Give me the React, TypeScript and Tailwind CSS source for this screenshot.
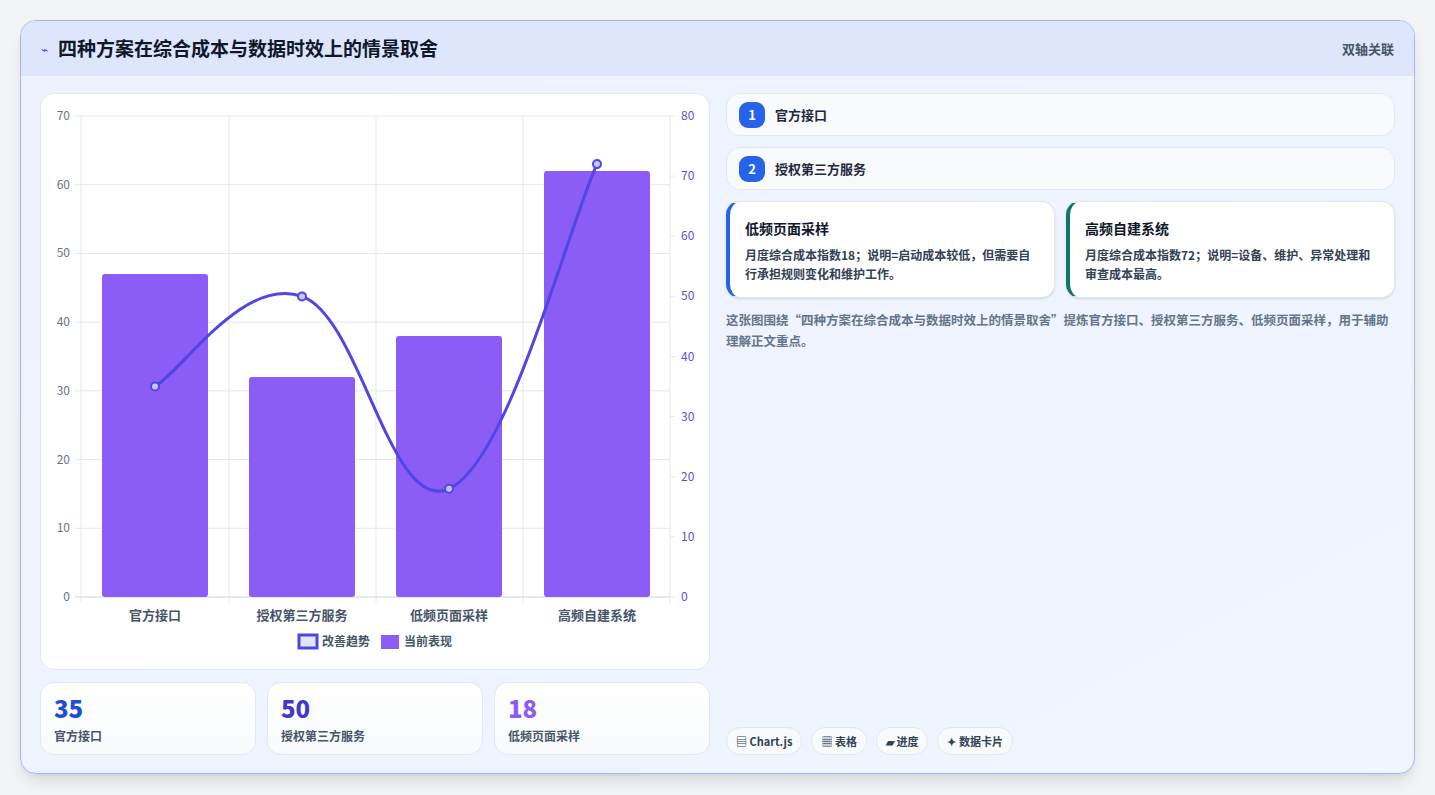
import React from "react";

const F = { fontFamily: '"Noto Sans CJK SC", "Noto Sans", sans-serif' };
const yl = (v: number) => 596 - (v / 70) * 481;
const yr = (v: number) => 596 - (v / 80) * 481;
const xs = [154, 301, 448, 596];
const bars = [47, 32, 38, 62];
const line = [35, 50, 18, 72];
const labels = ["官方接口", "授权第三方服务", "低频页面采样", "高频自建系统"];

function curve() {
  const p = xs.map((x, i) => [x, yr(line[i])]);
  let d = `M${p[0][0]},${p[0][1]}`;
  const t = 0.4;
  for (let i = 0; i < p.length - 1; i++) {
    const p0 = p[i - 1] || p[i], p1 = p[i], p2 = p[i + 1], p3 = p[i + 2] || p2;
    const c1x = p1[0] + (p2[0] - p0[0]) * t / 2, c1y = p1[1] + (p2[1] - p0[1]) * t / 2;
    const c2x = p2[0] - (p3[0] - p1[0]) * t / 2, c2y = p2[1] - (p3[1] - p1[1]) * t / 2;
    d += ` C${c1x},${c1y} ${c2x},${c2y} ${p2[0]},${p2[1]}`;
  }
  return d;
}

function Chart() {
  const lt = [0, 10, 20, 30, 40, 50, 60, 70];
  const rt = [0, 10, 20, 30, 40, 50, 60, 70, 80];
  return (
    <svg width="670" height="576" viewBox="40 93 670 576" style={F}>
      {lt.map((v) => (
        <g key={v}>
          <line x1={74} x2={669} y1={yl(v)} y2={yl(v)} stroke={v === 0 ? "#cbd5e1" : "#e2e8f0"} />
          <text x={69} y={yl(v) + 4} fontSize="12" fill="#64748b" textAnchor="end">{v}</text>
        </g>
      ))}
      {rt.map((v) => (
        <g key={v}>
          <line x1={669} x2={674} y1={yr(v)} y2={yr(v)} stroke="#e2e8f0" />
          <text x={680} y={yr(v) + 4} fontSize="12" fill="#5b4fd6">{v}</text>
        </g>
      ))}
      {[80, 228, 375, 522, 669].map((x) => (
        <line key={x} x1={x} x2={x} y1={115} y2={602} stroke="#e2e8f0" />
      ))}
      {bars.map((b, i) => (
        <rect key={i} x={xs[i] - 53} y={yl(b)} width={106} height={596 - yl(b)} rx={3} fill="#8b5cf6" />
      ))}
      <path d={curve()} fill="none" stroke="#4f46e5" strokeWidth="3" />
      {xs.map((x, i) => (
        <circle key={i} cx={x} cy={yr(line[i])} r={4} fill="#c7c5f5" stroke="#4f46e5" strokeWidth="2" />
      ))}
      {labels.map((l, i) => (
        <text key={i} x={xs[i]} y={619} fontSize="13" fill="#475569" textAnchor="middle" fontWeight="600">{l}</text>
      ))}
      <rect x={298} y={634} width={18} height={13} fill="#e0e7ff" stroke="#4f46e5" strokeWidth="3" />
      <text x={321} y={645} fontSize="12" fill="#475569" fontWeight="600">改善趋势</text>
      <rect x={380} y={634} width={18} height={14} fill="#8b5cf6" />
      <text x={403} y={645} fontSize="12" fill="#475569" fontWeight="600">当前表现</text>
    </svg>
  );
}

export default function App() {
  return (
    <div className="w-[1435px] h-[795px] bg-[#f3f4f6] p-[20px] pb-0" style={F}>
      <div className="w-[1395px] h-[754px] rounded-[16px] border border-[#a5b4fc] overflow-hidden bg-gradient-to-br from-[#eef2ff] to-[#eff6ff] flex flex-col shadow-lg">
        <div className="h-[55px] bg-[#dde6fd] flex items-center justify-between px-[20px]">
          <div className="flex items-center gap-[10px]">
            <span className="text-[#4f46e5] text-[12px]">⌁</span>
            <span className="text-[19px] font-bold text-[#0f172a]">四种方案在综合成本与数据时效上的情景取舍</span>
          </div>
          <span className="text-[13px] text-[#475569] font-semibold">双轴关联</span>
        </div>
        <div className="flex gap-[16px] px-[19px] pt-[17px] pb-[18px] flex-1">
          <div className="w-[670px] flex flex-col gap-[12px]">
            <div className="h-[577px] bg-white rounded-[14px] border border-[#e2e8f0] overflow-hidden">
              <Chart />
            </div>
            <div className="grid grid-cols-3 gap-[11px]">
              {[["35", "text-[#1d4ed8]", "官方接口"], ["50", "text-[#4338ca]", "授权第三方服务"], ["18", "text-[#8b5cf6]", "低频页面采样"]].map(([n, c, l]) => (
                <div key={n} className="h-[73px] rounded-[14px] border border-[#e2e8f0] bg-gradient-to-b from-white to-[#f8fafc] px-[13px] pt-[10px]">
                  <div className={`text-[24px] font-extrabold leading-[30px] ${c}`}>{n}</div>
                  <div className="text-[12px] text-[#475569] font-semibold mt-[4px]">{l}</div>
                </div>
              ))}
            </div>
          </div>
          <div className="flex-1 flex flex-col">
            <div className="flex flex-col gap-[11px]">
              {["官方接口", "授权第三方服务"].map((t, i) => (
                <div key={t} className="h-[43px] rounded-[14px] border border-[#e2e8f0] bg-[#f8fafc] flex items-center gap-[10px] px-[12px]">
                  <span className="w-[26px] h-[26px] rounded-[9px] bg-[#2563eb] text-white text-[13px] font-bold flex items-center justify-center">{i + 1}</span>
                  <span className="text-[13px] font-semibold text-[#1e293b]">{t}</span>
                </div>
              ))}
            </div>
            <div className="grid grid-cols-2 gap-[11px] mt-[11px]">
              {[["低频页面采样", "月度综合成本指数18；说明=启动成本较低，但需要自行承担规则变化和维护工作。", "border-l-[#2563eb]"], ["高频自建系统", "月度综合成本指数72；说明=设备、维护、异常处理和审查成本最高。", "border-l-[#0f766e]"]].map(([h, b, c]) => (
                <div key={h} className={`h-[97px] rounded-[14px] bg-white border border-[#e2e8f0] border-l-4 ${c} px-[15px] pt-[16px] shadow-sm`}>
                  <div className="text-[14px] font-bold text-[#0f172a]">{h}</div>
                  <div className="text-[12px] leading-[19px] text-[#334155] font-semibold mt-[6px]">{b}</div>
                </div>
              ))}
            </div>
            <p className="text-[12.5px] leading-[21px] text-[#64748b] font-semibold mt-[11px]">这张图围绕“四种方案在综合成本与数据时效上的情景取舍”提炼官方接口、授权第三方服务、低频页面采样，用于辅助理解正文重点。</p>
            <div className="mt-auto flex gap-[9px]">
              {["▤ Chart.js", "▦ 表格", "▰ 进度", "✦ 数据卡片"].map((t) => (
                <span key={t} className="h-[28px] px-[9px] rounded-full border border-[#e2e8f0] bg-[#f8fafc] text-[11px] font-bold text-[#334155] flex items-center">{t}</span>
              ))}
            </div>
          </div>
        </div>
      </div>
    </div>
  );
}
